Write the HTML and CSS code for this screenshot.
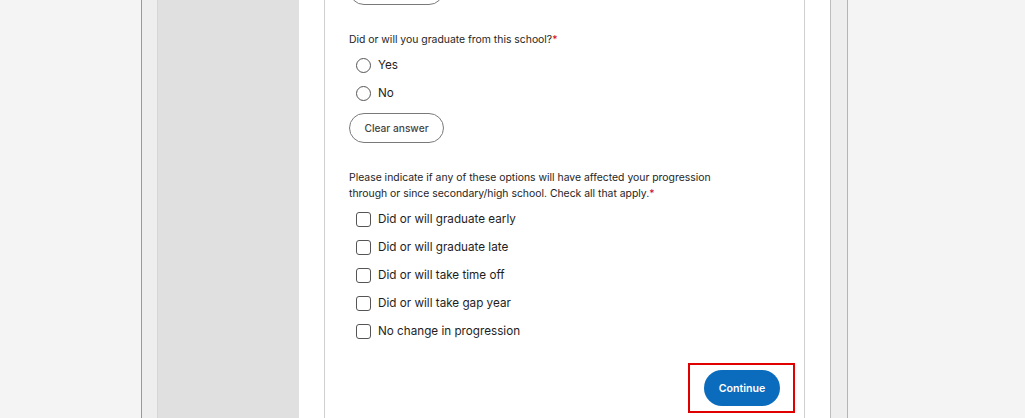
FILE: index.html
```html
<!DOCTYPE html>
<html lang="en">
<head>
<meta charset="utf-8">
<title>Form</title>
<link rel="stylesheet" href="styles.css">
</head>
<body>
<div class="page">
  <div class="bg bg-left"></div>
  <div class="frame">
    <div class="strip"></div>
    <aside class="sidebar"></aside>
    <main class="main">
      <section class="card">
        <button class="pill clip" type="button" aria-label="Clear answer"></button>

        <fieldset class="question q1">
          <legend class="qtext">Did or will you graduate from this school?<span class="req">*</span></legend>
          <label class="opt"><span class="radio"></span><span>Yes</span></label>
          <label class="opt"><span class="radio"></span><span>No</span></label>
        </fieldset>
        <button class="pill after-q" type="button">Clear answer</button>

        <fieldset class="question q2">
          <legend class="qtext">Please indicate if any of these options will have affected your progression<br>through or since secondary/high school. Check all that apply.<span class="req">*</span></legend>
          <label class="opt"><span class="check"></span><span>Did or will graduate early</span></label>
          <label class="opt"><span class="check"></span><span>Did or will graduate late</span></label>
          <label class="opt"><span class="check"></span><span>Did or will take time off</span></label>
          <label class="opt"><span class="check"></span><span>Did or will take gap year</span></label>
          <label class="opt"><span class="check"></span><span>No change in progression</span></label>
        </fieldset>

        <div class="footer">
          <div class="btnwrap">
            <button class="primary" type="button">Continue</button>
            <span class="highlight"></span>
          </div>
        </div>
      </section>
    </main>
    <div class="strip"></div>
  </div>
  <div class="bg"></div>
</div>
</body>
</html>
```

FILE: styles.css
```css
* { box-sizing: border-box; }
html, body { margin: 0; padding: 0; height: 100%; }
body {
  font-family: Inter, "Noto Sans", "Liberation Sans", sans-serif;
  color: #222;
  background: #f4f4f4;
  overflow: hidden;
}
.page {
  display: flex;
  height: 418px;
}
.bg {
  flex: 1;
  background: #f4f4f4;
}
.bg-left { flex: none; width: 141px; }
.frame {
  display: flex;
  flex: none;
  width: 707px;
  border-left: 1px solid #9a9a9a;
  border-right: 1px solid #b5b5b5;
}
.strip {
  width: 16px;
  background: #eeeeee;
  flex: none;
}
.frame > .strip:first-child { border-right: 1px solid #d6d6d6; }
.frame > .strip:last-child { border-left: 1px solid #bdbdbd; width: 17px; }
.sidebar {
  width: 141px;
  flex: none;
  background: #e0e0e0;
}
.main {
  flex: 1;
  background: #fff;
  padding: 0 25px;
  overflow: hidden;
}
.card {
  border-left: 1px solid #d0d0d0;
  border-right: 1px solid #d0d0d0;
  padding: 0 24px 40px 24px;
  min-height: 500px;
}
.pill {
  display: block;
  width: 95px;
  height: 30px;
  border: 1px solid #7a7a7a;
  border-radius: 15px;
  background: #fff;
  font-family: inherit;
  font-size: 10.2px;
  font-weight: 500;
  color: #444;
  padding: 0;
  cursor: pointer;
}
.pill.clip { margin-top: -25px; }
.pill.after-q { margin-top: 6px; }
.question {
  border: 0;
  margin: 0;
  padding: 0;
  min-width: 0;
}
.q1 { margin-top: 27px; }
.q2 { margin-top: 27px; }
.qtext {
  padding: 0;
  font-size: 10.4px;
  line-height: 16px;
  color: #1e1e1e;
  margin-bottom: 3px;
}
.req { color: #d0021b; }
.opt {
  display: flex;
  align-items: center;
  height: 28px;
  padding-left: 7px;
  font-size: 11.7px;
  color: #1e1e1e;
  gap: 7px;
}
.radio {
  width: 15px;
  height: 15px;
  border: 1.5px solid #555;
  border-radius: 50%;
  flex: none;
}
.check {
  width: 15px;
  height: 15px;
  border: 1.5px solid #555;
  border-radius: 3px;
  flex: none;
}
.footer {
  display: flex;
  justify-content: flex-end;
  margin-top: 25px;
}
.btnwrap { position: relative; }
.primary {
  display: block;
  width: 76px;
  height: 36px;
  border: 0;
  border-radius: 18px;
  background: #0b6cbd;
  color: #fff;
  font-family: inherit;
  font-size: 10.6px;
  font-weight: 600;
  padding: 0;
}
.highlight {
  position: absolute;
  top: -7px;
  bottom: -7px;
  left: -16px;
  right: -15px;
  border: 2px solid #e00000;
  pointer-events: none;
}
```
